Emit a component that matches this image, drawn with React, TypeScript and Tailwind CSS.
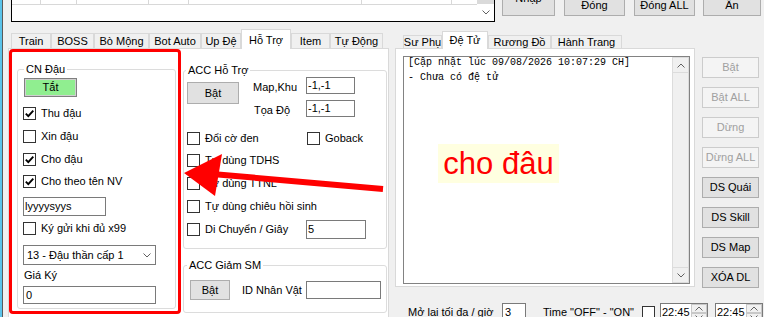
import React from 'react';

type BoxProps = { className?: string };

function Button({ label, className = '', disabled = false }: { label: string; className?: string; disabled?: boolean }) {
  const tone = disabled
    ? 'border-[#cccccc] bg-[#f4f4f4] text-[#a0a0a0]'
    : 'border-[#adadad] bg-[#e1e1e1] text-black';
  return (
    <div className={`flex shrink-0 items-center justify-center border ${tone} ${className}`}>
      <span className="whitespace-nowrap">{label}</span>
    </div>
  );
}

function CheckBox({ label, checked = false, className = '' }: { label?: string; checked?: boolean; className?: string }) {
  return (
    <div className={`flex h-[17px] shrink-0 items-center ${className}`}>
      <div className="flex h-[13px] w-[13px] shrink-0 items-center justify-center border border-[#333333] bg-white">
        {checked && (
          <svg width="11" height="11" viewBox="0 0 11 11">
            <path d="M1.8 5.6 L4.3 8.1 L9.3 2.6" fill="none" stroke="#000000" strokeWidth="1.9" />
          </svg>
        )}
      </div>
      {label && <span className="ml-[5px] whitespace-nowrap">{label}</span>}
    </div>
  );
}

function TextBox({ value = '', className = '' }: { value?: string; className?: string }) {
  return (
    <div className={`flex shrink-0 items-center border border-[#7a7a7a] bg-white pl-[1px] ${className}`}>
      <span className="whitespace-nowrap">{value}</span>
    </div>
  );
}

function Chevron({ up = false, className = '' }: { up?: boolean } & BoxProps) {
  return (
    <svg width="8" height="5" viewBox="0 0 8 5" className={className}>
      <path d={up ? 'M0.5 4.5 L4 1 L7.5 4.5' : 'M0.5 0.5 L4 4 L7.5 0.5'} fill="none" stroke="#606060" strokeWidth="1" />
    </svg>
  );
}

function Group({ title, className = '', labelClass = 'left-[6px]', children }: { title: string; className?: string; labelClass?: string; children?: React.ReactNode }) {
  return (
    <div className={`relative shrink-0 rounded-[3px] border border-[#dcdcdc] ${className}`}>
      <span className={`absolute top-[-8px] bg-white px-[2px] leading-[14px] whitespace-nowrap ${labelClass}`}>{title}</span>
      {children}
    </div>
  );
}

function Tab({ label, className = '', selected = false }: { label: string; className?: string; selected?: boolean }) {
  const tone = selected
    ? 'relative z-10 -mb-px bg-white border-[#d9d9d9]'
    : 'bg-[#f0f0f0] border-[#d9d9d9]';
  return (
    <div className={`flex shrink-0 items-center justify-center border-x border-t ${tone} ${className}`}>
      <span className="whitespace-nowrap">{label}</span>
    </div>
  );
}

function TimePicker({ className = '' }: BoxProps) {
  return (
    <div className={`flex h-[20px] w-[48px] shrink-0 items-start border border-[#7a7a7a] bg-white ${className}`}>
      <span className="pl-[1px] pt-[2px] leading-[13px]">22:45</span>
      <div className="ml-auto flex w-[16px] flex-col">
        <div className="flex h-[9px] items-center justify-center border border-[#c8c8c8] bg-[#f0f0f0]">
          <Chevron up />
        </div>
        <div className="flex h-[9px] items-center justify-center border border-[#c8c8c8] bg-[#f0f0f0]">
          <Chevron />
        </div>
      </div>
    </div>
  );
}

export default function App() {
  return (
    <div className="relative flex h-[317px] w-[764px] overflow-hidden bg-[#f0f0f0] font-['Liberation_Sans',Arial,sans-serif] text-[11px] leading-[13px] text-black">
      <div className="w-[2px] shrink-0 bg-[#5bc3ea]" />
      <div className="w-px shrink-0 bg-[#5a5a5a]" />

      <div className="flex flex-1 flex-col">
        {/* top list + buttons */}
        <div className="flex h-[29px] shrink-0 items-start">
          <div className="ml-[8px] flex h-[22px] w-[484px] shrink-0 border-x border-b border-black bg-white">
            <div className="flex flex-1 flex-col">
              <div className="flex h-[5px] border-b border-[#d8d8d8]">
                <div className="w-[29px] border-r border-[#d8d8d8]" />
                <div className="w-[36px] border-r border-[#d8d8d8]" />
                <div className="w-[72px] border-r border-[#d8d8d8]" />
                <div className="w-[40px] border-r border-[#d8d8d8]" />
                <div className="w-[173px] border-r border-[#d8d8d8]" />
                <div className="w-[90px] border-r border-[#d8d8d8]" />
              </div>
            </div>
            <div className="flex w-[17px] flex-col bg-white">
              <div className="h-[4px] bg-[#dadada]" />
              <div className="flex flex-1 items-center justify-center">
                <Chevron />
              </div>
            </div>
          </div>
          <Button label="Nhập" className="ml-[7px] -mt-[20px] h-[36px] w-[53px]" />
          <Button label="Đóng" className="ml-[9px] -mt-[6px] h-[22px] w-[61px]" />
          <Button label="Đóng ALL" className="ml-[9px] -mt-[6px] h-[22px] w-[61px]" />
          <Button label="Ẩn" className="ml-[8px] -mt-[6px] h-[22px] w-[58px]" />
        </div>

        <div className="flex flex-1">
          {/* left tab control */}
          <div className="ml-[5px] flex w-[381px] shrink-0 flex-col">
            <div className="flex h-[19px] shrink-0 items-end pl-[3px]">
              <Tab label="Train" className="h-[15px] w-[40px]" />
              <Tab label="BOSS" className="h-[15px] w-[43px]" />
              <Tab label="Bò Mộng" className="h-[15px] w-[55px]" />
              <Tab label="Bot Auto" className="h-[15px] w-[52px]" />
              <Tab label="Up Đệ" className="h-[15px] w-[40px]" />
              <Tab label="Hỗ Trợ" selected className="h-[20px] w-[50px] pt-[1px]" />
              <Tab label="Item" className="h-[15px] w-[39px]" />
              <Tab label="Tự Động" className="h-[15px] w-[53px]" />
            </div>
            <div className="flex h-[280px] shrink-0 items-start border border-[#d9d9d9] bg-white pl-[8px] pt-[20px]">
              <Group title="CN Đậu" className="h-[240px] w-[159px]">
                <div className="flex flex-col items-start pl-[5px] pt-[8px]">
                  <div className="ml-px flex h-[19px] w-[53px] items-center justify-center border border-[#7f7f7f] bg-[#90ee90] shadow-[inset_0_0_0_1px_#cfcfcf]">
                    Tắt
                  </div>
                  <CheckBox checked label="Thu đậu" className="mt-[8px]" />
                  <CheckBox label="Xin đậu" className="mt-[6px]" />
                  <CheckBox checked label="Cho đậu" className="mt-[6px]" />
                  <CheckBox checked label="Cho theo tên NV" className="mt-[5px]" />
                  <TextBox value="lyyyysyys" className="mt-[7px] h-[19px] w-[83px]" />
                  <CheckBox label="Ký gửi khi đủ x99" className="mt-[4px]" />
                  <div className="mt-[8px] flex h-[20px] w-[133px] items-center border border-[#7a7a7a] bg-white pl-[3px]">
                    <span className="whitespace-nowrap">13 - Đậu thần cấp 1</span>
                    <Chevron className="ml-auto mr-[4px]" />
                  </div>
                  <span className="mt-[4px] pl-[1px] leading-[13px]">Giá Ký</span>
                  <TextBox value="0" className="mt-[4px] h-[18px] w-[133px] pl-[2px]" />
                </div>
              </Group>

              <div className="ml-[7px] flex w-[204px] shrink-0 flex-col pt-px">
                <Group title="ACC Hỗ Trợ" className="h-[179px]" labelClass="left-[2px]">
                  <div className="flex flex-col pl-[3px] pt-[6px]">
                    <div className="flex items-start">
                      <Button label="Bật" className="mt-[5px] h-[22px] w-[52px]" />
                      <div className="ml-[14px] flex flex-col">
                        <div className="flex items-start">
                          <span className="mt-[4px] w-[53px] leading-[13px]">Map,Khu</span>
                          <TextBox value="-1,-1" className="h-[17px] w-[49px]" />
                        </div>
                        <div className="mt-[6px] flex items-start">
                          <span className="mt-[4px] w-[53px] pl-px leading-[13px]">Tọa Độ</span>
                          <TextBox value="-1,-1" className="h-[17px] w-[49px]" />
                        </div>
                      </div>
                    </div>
                    <div className="mt-[13px] flex">
                      <div className="w-[120px]">
                        <CheckBox label="Đổi cờ đen" />
                      </div>
                      <CheckBox label="Goback" />
                    </div>
                    <CheckBox label="Tự dùng TDHS" className="mt-[5px]" />
                    <CheckBox label="Tự dùng TTNL" className="mt-[6px]" />
                    <CheckBox label="Tự dùng chiêu hồi sinh" className="mt-[6px]" />
                    <div className="mt-[5px] flex h-[19px] items-center">
                      <div className="w-[119px]">
                        <CheckBox label="Di Chuyển / Giây" />
                      </div>
                      <TextBox value="5" className="h-[19px] w-[60px]" />
                    </div>
                  </div>
                </Group>

                <Group title="ACC Giảm SM" className="mt-[16px] h-[48px]" labelClass="left-[3px]">
                  <div className="flex items-center pl-[6px] pt-[14px]">
                    <Button label="Bật" className="h-[20px] w-[40px]" />
                    <span className="ml-[12px] w-[64px] whitespace-nowrap">ID Nhân Vật</span>
                    <TextBox className="h-[18px] w-[75px]" />
                  </div>
                </Group>
              </div>
            </div>
          </div>

          {/* right side */}
          <div className="ml-[6px] flex flex-1 flex-col">
            <div className="flex h-[260px] shrink-0">
              <div className="flex w-[300px] shrink-0 flex-col">
                <div className="flex h-[19px] shrink-0 items-end pl-[8px]">
                  <Tab label="Sư Phụ" className="h-[13px] w-[39px]" />
                  <Tab label="Đệ Tử" selected className="h-[18px] w-[46px]" />
                  <Tab label="Rương Đồ" className="h-[13px] w-[63px]" />
                  <Tab label="Hành Trang" className="h-[13px] w-[71px]" />
                </div>
                <div className="flex h-[239px] shrink-0 items-start border border-[#d9d9d9] bg-white pl-[7px] pt-[7px]">
                  <div className="flex h-[228px] w-[287px] border border-[#828282] bg-white">
                    <div className="-mt-[2px] flex-1 pl-[4px] font-['Liberation_Mono',monospace] text-[10px] leading-[15px]">
                      <div className="whitespace-pre">[Cập nhật lúc 09/08/2026 10:07:29 CH]</div>
                      <div className="whitespace-pre">- Chưa có đệ tử</div>
                    </div>
                    <div className="flex w-[17px] flex-col bg-[#f0f0f0]">
                      <div className="flex h-[16px] items-center justify-center border border-[#dcdcdc]">
                        <Chevron up />
                      </div>
                      <div className="flex-1 border-x border-[#dcdcdc]" />
                      <div className="flex h-[16px] items-center justify-center border border-[#dcdcdc]">
                        <Chevron />
                      </div>
                    </div>
                  </div>
                </div>
              </div>

              <div className="ml-[7px] flex flex-col gap-[9px] pt-[28px]">
                <Button label="Bật" disabled className="h-[21px] w-[57px]" />
                <Button label="Bật ALL" disabled className="h-[21px] w-[57px]" />
                <Button label="Dừng" disabled className="h-[21px] w-[57px]" />
                <Button label="Dừng ALL" disabled className="h-[21px] w-[57px]" />
                <Button label="DS Quái" className="h-[21px] w-[57px]" />
                <Button label="DS Skill" className="h-[21px] w-[57px]" />
                <Button label="DS Map" className="h-[21px] w-[57px]" />
                <Button label="XÓA DL" className="h-[21px] w-[57px]" />
              </div>
            </div>

            <div className="mt-[14px] flex h-[18px] items-center pl-[13px]">
              <span className="w-[94px] whitespace-nowrap">Mở lại tối đa / giờ</span>
              <TextBox value="3" className="h-[18px] w-[24px] pl-[2px]" />
              <span className="ml-[17px] w-[99px] whitespace-nowrap">{'Time "OFF" - "ON"'}</span>
              <CheckBox />
              <TimePicker className="ml-[5px] self-start" />
              <TimePicker className="ml-[7px] self-start" />
            </div>
          </div>
        </div>
      </div>

      {/* annotations */}
      <div className="pointer-events-none absolute left-[9px] top-[49px] h-[265px] w-[172px] rounded-[4px] border-[3px] border-[#ff0000]" />
      <svg className="pointer-events-none absolute left-0 top-0" width="764" height="317" viewBox="0 0 764 317">
        <line x1="212" y1="174" x2="383" y2="189" stroke="#ff0000" strokeWidth="6" />
        <polygon points="184,173 222,154 215,196" fill="#ff0000" />
      </svg>
      <div className="pointer-events-none absolute left-[438px] top-[144px] flex h-[39px] w-[121px] items-center justify-center bg-[#ffffe0] text-[31px] leading-[36px] text-[#ff0000]">
        cho đâu
      </div>
    </div>
  );
}
